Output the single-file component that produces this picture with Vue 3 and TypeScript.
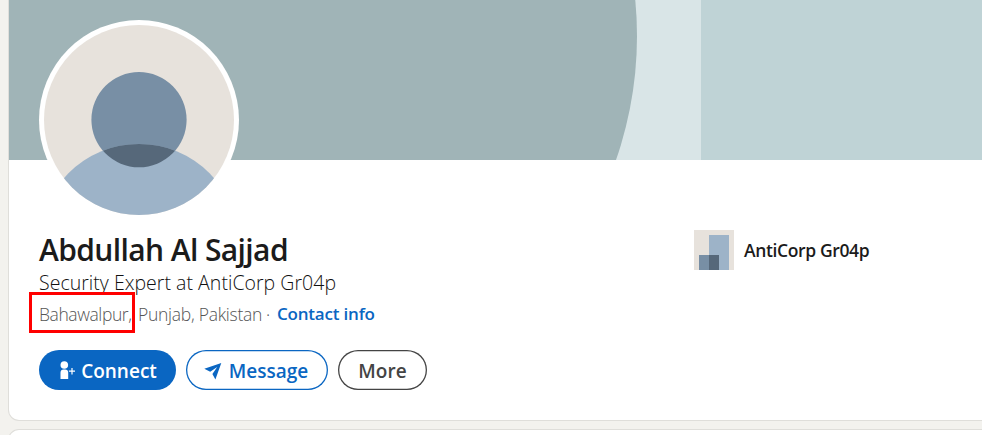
<script setup lang="ts">
interface Profile {
  name: string
  headline: string
  city: string
  region: string
  company: string
}

const profile: Profile = {
  name: 'Abdullah Al Sajjad',
  headline: 'Security Expert at AntiCorp Gr04p',
  city: 'Bahawalpur,',
  region: 'Punjab, Pakistan',
  company: 'AntiCorp Gr04p',
}
</script>

<template>
  <main class="page">
    <section class="card">
      <svg class="banner" width="973" height="160" viewBox="9 0 973 160" aria-hidden="true">
        <rect x="9" width="973" height="160" fill="#d9e5e7" />
        <rect x="701" width="281" height="160" fill="#bfd3d6" />
        <circle cx="261" cy="36" r="376" fill="#a0b4b7" />
      </svg>
      <div class="body">
        <svg class="avatar" width="200" height="200" viewBox="0 0 200 200" aria-hidden="true">
          <defs>
            <clipPath id="photo"><circle cx="100" cy="100" r="95" /></clipPath>
            <clipPath id="head"><circle cx="100" cy="99.7" r="47.6" /></clipPath>
          </defs>
          <circle cx="100" cy="100" r="100" fill="#fff" />
          <circle cx="100" cy="100" r="95" fill="#e7e2dc" />
          <circle cx="100" cy="99.7" r="47.6" fill="#788fa5" />
          <circle cx="100" cy="223.7" r="99.8" fill="#9db3c8" clip-path="url(#photo)" />
          <g clip-path="url(#head)"><circle cx="100" cy="223.7" r="99.8" fill="#56687a" /></g>
        </svg>
        <div class="columns">
          <div class="details">
            <h1><span>{{ profile.name }}</span></h1>
            <p class="headline"><span>{{ profile.headline }}</span></p>
            <p class="location">
              <span class="city">{{ profile.city }}</span>
              <span class="region">{{ profile.region }}</span>
              <span class="dot">·</span>
              <a class="contact">Contact info</a>
            </p>
          </div>
          <div class="company">
            <svg width="40" height="40" viewBox="0 0 40 40" aria-hidden="true">
              <path d="M0 0h40v40H0z" fill="#e7e2dc" />
              <path d="M15 5h20v35H15z" fill="#9db3c8" />
              <path d="M5 25h10v15H5z" fill="#788fa5" />
              <path d="M15 25h10v15H15z" fill="#56687a" />
            </svg>
            <span>{{ profile.company }}</span>
          </div>
        </div>
        <div class="actions">
          <button class="connect">
            <svg width="16" height="20" viewBox="0 0 16 20" fill="currentColor" aria-hidden="true">
              <circle cx="5.3" cy="5" r="3.8" />
              <path d="M1.5 19v-6.2c0-2 1.2-3.2 3-3.2h1.7c1.8 0 3 1.2 3 3.2V19z" />
              <path d="M12.4 8h1.2v2.6h2.5v1.2h-2.5v2.6h-1.2v-2.6H9.9v-1.2h2.5z" />
            </svg>
            <span>Connect</span>
          </button>
          <button class="message">
            <svg width="18" height="18" viewBox="0 0 18 18" fill="currentColor" aria-hidden="true">
              <path d="M17.3 1 .3 6.8l5.9 3L13.2 5l-4.8 7 3 5.6z" />
            </svg>
            <span>Message</span>
          </button>
          <button class="more"><span>More</span></button>
        </div>
      </div>
    </section>
    <section class="card next"></section>
    <div class="highlight"></div>
  </main>
</template>

<style>
body { background: #f3f2ef; }
</style>

<style scoped>
.page {
  position: relative;
  width: 982px;
  height: 435px;
  overflow: hidden;
  background: #f3f2ee;
  font-family: "Open Sans", "Noto Sans", sans-serif;
  color: #1b1b1b;
}
.card {
  box-sizing: border-box;
  margin-left: 9px;
  height: 420px;
  background: #fff;
  border-radius: 0 0 0 10px;
  box-shadow: 0 0 0 1px #dfdeda;
}
.next { margin-top: 10px; height: 60px; border-radius: 10px 0 0 0; }
.banner { display: block; }
.body { padding-left: 30px; }
.avatar { display: block; margin-top: -140px; }
.columns { display: flex; height: 130px; }
.details { width: 655px; }
h1, p { margin: 0; white-space: nowrap; }
h1 {
  padding-top: 10px;
  font-size: 30px;
  line-height: 40px;
  font-weight: 600;
  letter-spacing: -0.61px;
}
.headline {
  font-size: 19.5px;
  line-height: 25px;
  color: #111;
  font-weight: 300;
  letter-spacing: 0.03px;
}
.location {
  display: flex;
  margin-top: 6px;
  font-size: 17.5px;
  line-height: 26px;
  color: #555;
  font-weight: 300;
}
.city { width: 99px; letter-spacing: -0.4px; }
.region { width: 128px; letter-spacing: -0.27px; }
.dot { width: 11px; }
.contact { color: #0a66c2; font-weight: 600; font-size: 17px; letter-spacing: -0.2px; }
.company {
  display: flex;
  gap: 10px;
  height: 40px;
  padding-top: 10px;
  align-items: center;
  font-size: 17.5px;
  font-weight: 600;
  letter-spacing: -0.37px;
  white-space: nowrap;
}
.actions { display: flex; gap: 10px; }
button {
  box-sizing: border-box;
  display: flex;
  align-items: center;
  justify-content: center;
  height: 40px;
  padding: 0;
  border: 0;
  border-radius: 20px;
  background: #fff;
  font: 600 19px/24px "Open Sans", "Noto Sans", sans-serif;
  white-space: nowrap;
}
button span { padding-top: 2px; }
.connect { width: 137px; gap: 6px; padding-left: 1px; color: #fff; background: #0a66c2; }
.message { width: 142px; gap: 7px; padding-right: 2px; color: #0a66c2; box-shadow: inset 0 0 0 1.3px #0a66c2; }
.message svg { margin-top: 1px; }
.more { width: 89px; color: #444; box-shadow: inset 0 0 0 1.3px #444; }
.highlight {
  position: absolute;
  box-sizing: border-box;
  left: 29px;
  top: 292px;
  width: 106px;
  height: 41px;
  border: 3px solid #f00;
}
</style>
